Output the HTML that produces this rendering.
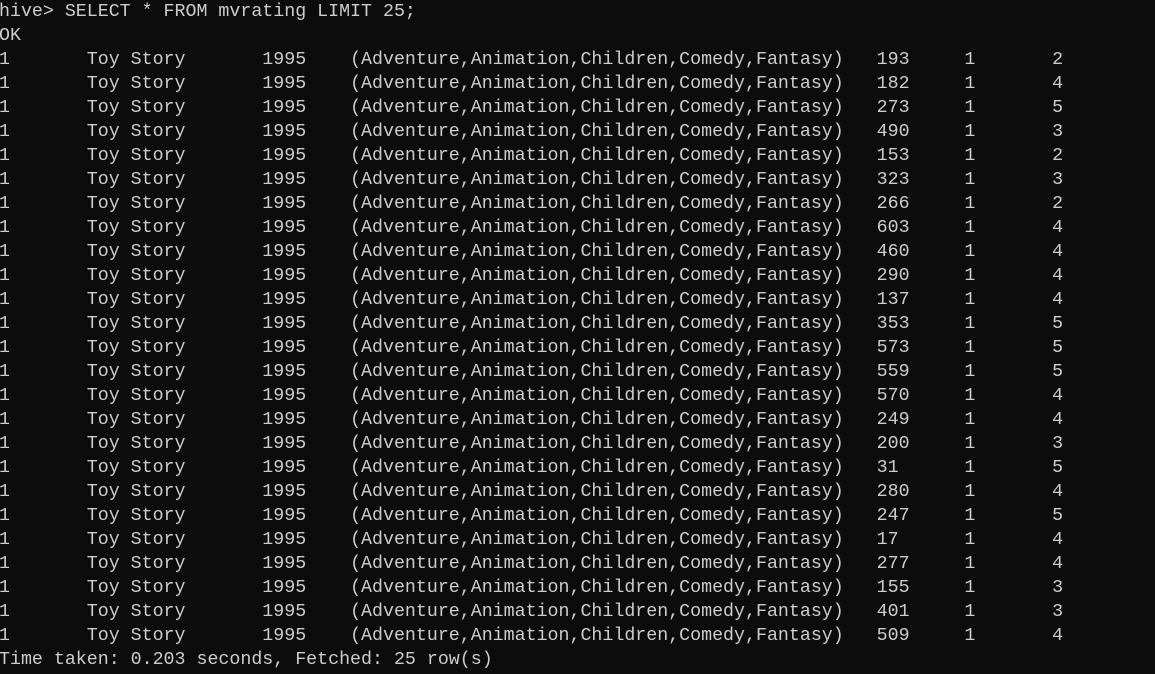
<!DOCTYPE html>
<html><head><meta charset="utf-8"><style>
html,body{margin:0;padding:0;background:#0c0c0c;width:1155px;height:674px;overflow:hidden}
pre{position:absolute;left:-1px;top:0px;margin:0;font-family:"Liberation Mono",monospace;font-size:18.3px;line-height:24px;color:#cccccc;tab-size:8;-moz-tab-size:8;white-space:pre}
</style></head><body><pre>hive&gt; SELECT * FROM mvrating LIMIT 25;
OK
1	Toy Story	1995	(Adventure,Animation,Children,Comedy,Fantasy)	193	1	2
1	Toy Story	1995	(Adventure,Animation,Children,Comedy,Fantasy)	182	1	4
1	Toy Story	1995	(Adventure,Animation,Children,Comedy,Fantasy)	273	1	5
1	Toy Story	1995	(Adventure,Animation,Children,Comedy,Fantasy)	490	1	3
1	Toy Story	1995	(Adventure,Animation,Children,Comedy,Fantasy)	153	1	2
1	Toy Story	1995	(Adventure,Animation,Children,Comedy,Fantasy)	323	1	3
1	Toy Story	1995	(Adventure,Animation,Children,Comedy,Fantasy)	266	1	2
1	Toy Story	1995	(Adventure,Animation,Children,Comedy,Fantasy)	603	1	4
1	Toy Story	1995	(Adventure,Animation,Children,Comedy,Fantasy)	460	1	4
1	Toy Story	1995	(Adventure,Animation,Children,Comedy,Fantasy)	290	1	4
1	Toy Story	1995	(Adventure,Animation,Children,Comedy,Fantasy)	137	1	4
1	Toy Story	1995	(Adventure,Animation,Children,Comedy,Fantasy)	353	1	5
1	Toy Story	1995	(Adventure,Animation,Children,Comedy,Fantasy)	573	1	5
1	Toy Story	1995	(Adventure,Animation,Children,Comedy,Fantasy)	559	1	5
1	Toy Story	1995	(Adventure,Animation,Children,Comedy,Fantasy)	570	1	4
1	Toy Story	1995	(Adventure,Animation,Children,Comedy,Fantasy)	249	1	4
1	Toy Story	1995	(Adventure,Animation,Children,Comedy,Fantasy)	200	1	3
1	Toy Story	1995	(Adventure,Animation,Children,Comedy,Fantasy)	31	1	5
1	Toy Story	1995	(Adventure,Animation,Children,Comedy,Fantasy)	280	1	4
1	Toy Story	1995	(Adventure,Animation,Children,Comedy,Fantasy)	247	1	5
1	Toy Story	1995	(Adventure,Animation,Children,Comedy,Fantasy)	17	1	4
1	Toy Story	1995	(Adventure,Animation,Children,Comedy,Fantasy)	277	1	4
1	Toy Story	1995	(Adventure,Animation,Children,Comedy,Fantasy)	155	1	3
1	Toy Story	1995	(Adventure,Animation,Children,Comedy,Fantasy)	401	1	3
1	Toy Story	1995	(Adventure,Animation,Children,Comedy,Fantasy)	509	1	4
Time taken: 0.203 seconds, Fetched: 25 row(s)</pre></body></html>
